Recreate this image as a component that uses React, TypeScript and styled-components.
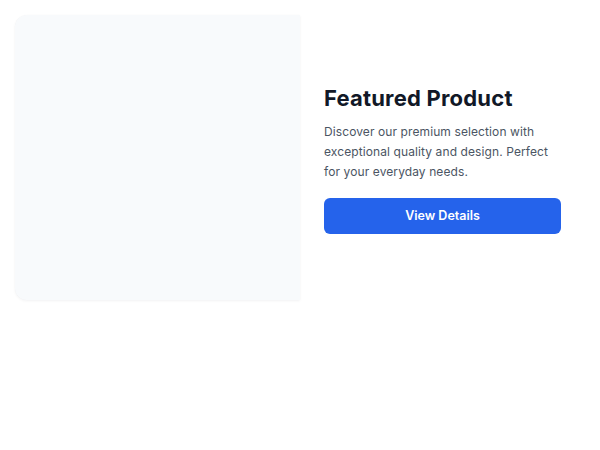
import React from "react";
import styled, { createGlobalStyle } from "styled-components";

const Global = createGlobalStyle`
  html, body { margin: 0; padding: 0; background: #ffffff; }
  body { font-family: Inter, "Noto Sans", sans-serif; -webkit-font-smoothing: antialiased; }
`;

const Page = styled.div`
  padding: 15px;
`;

const Card = styled.div`
  display: grid;
  grid-template-columns: 285px 285px;
  width: 570px;
  height: 285px;
`;

const ImageArea = styled.div`
  background: #f8fafc;
  border-radius: 12px 0 0 12px;
  box-shadow: 0 1px 3px rgba(15, 23, 42, 0.05), 0 0 1px rgba(15, 23, 42, 0.04);
`;

const Content = styled.div`
  display: flex;
  flex-direction: column;
  justify-content: center;
  padding: 0 24px;
`;

const Title = styled.h2`
  margin: 0 0 8px;
  font-size: 22px;
  line-height: 32px;
  font-weight: 700;
  color: #111827;
  letter-spacing: 0.2px;
`;

const Description = styled.p`
  margin: 0 0 16px;
  font-size: 12px;
  line-height: 20px;
  color: #4b5563;
  letter-spacing: 0.1px;
`;

const Button = styled.button`
  height: 36px;
  border: none;
  border-radius: 6px;
  background: #2563eb;
  color: #ffffff;
  font-family: inherit;
  font-size: 12.5px;
  font-weight: 600;
  cursor: pointer;
`;

export default function App() {
  return (
    <>
      <Global />
      <Page>
        <Card>
          <ImageArea />
          <Content>
            <Title>Featured Product</Title>
            <Description>
              Discover our premium selection with exceptional quality and design. Perfect for your everyday needs.
            </Description>
            <Button>View Details</Button>
          </Content>
        </Card>
      </Page>
    </>
  );
}
